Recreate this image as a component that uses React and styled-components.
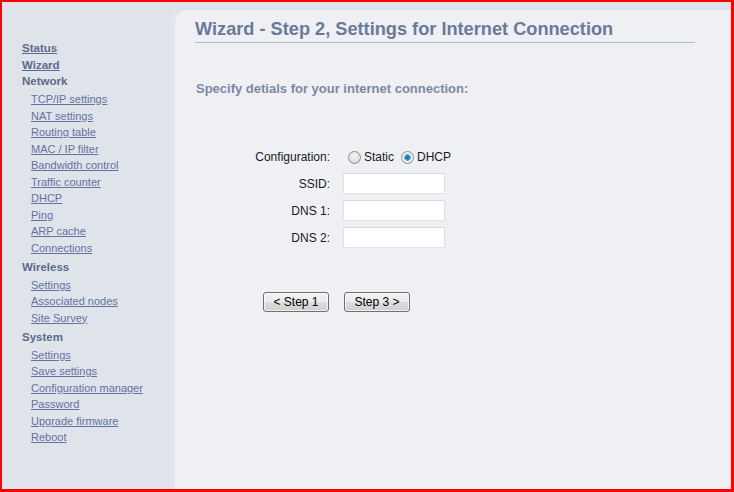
import React from "react";
import styled, { createGlobalStyle } from "styled-components";

const Global = createGlobalStyle`
  html, body { margin: 0; padding: 0; }
  body { font-family: "Liberation Sans", Arial, sans-serif; background: #dfe3ea; }
  * { box-sizing: border-box; }
`;

const Frame = styled.div`
  width: 734px;
  height: 492px;
  border: 2px solid #f00;
  border-right-width: 3px;
  border-bottom-width: 3px;
  background: #dfe3ea;
  display: flex;
  overflow: hidden;
`;

const Sidebar = styled.nav`
  width: 173px;
  flex: none;
  padding: 38px 0 0 20px;
  display: flex;
  flex-direction: column;
  font-family: "Liberation Sans", Tahoma, sans-serif;
  font-size: 11px;
  line-height: 16.5px;
  background: linear-gradient(to right, #dfe3ea 0, #dfe3ea 166px, #e3e7ee 173px);
`;

const TopLink = styled.a`
  color: #5b6b8d;
  font-weight: bold;
  font-size: 11.5px;
  text-decoration: underline;
  align-self: flex-start;
`;

const Heading = styled.div`
  color: #5b6b8d;
  font-weight: bold;
  font-size: 11.5px;
  padding: ${(p) => (p.$first ? "0 0 1.5px" : "2.5px 0 1.5px")};
`;

const SubLink = styled.a`
  color: #6373a0;
  text-decoration: underline;
  margin-left: 9px;
  align-self: flex-start;
`;

const Main = styled.main`
  flex: 1;
  margin-top: 8px;
  background: #eef0f4;
  border-top-left-radius: 12px;
  padding: 8px 0 0 20px;
`;

const Title = styled.h1`
  margin: 0;
  width: 500px;
  font-size: 18.2px;
  line-height: 22px;
  font-weight: bold;
  color: #6b7a99;
  padding-bottom: 2px;
  border-bottom: 1px solid #b3bccd;
`;

const Subtitle = styled.p`
  margin: 38px 0 0 1px;
  font-size: 13px;
  line-height: 16px;
  font-weight: bold;
  color: #7b89a5;
`;

const Form = styled.div`
  margin-top: 50px;
  display: grid;
  grid-template-columns: 135px auto;
  column-gap: 13px;
  row-gap: 6px;
  align-items: center;
  justify-content: start;
  font-size: 12px;
  color: #1a1a1a;
`;

const Label = styled.label`
  text-align: right;
  line-height: 20px;
`;

const RadioGroup = styled.div`
  display: flex;
  align-items: center;
  height: 20px;
`;

const Radio = styled.input.attrs({ type: "radio" })`
  appearance: none;
  width: 13px;
  height: 13px;
  margin: 0 3px 0 5px;
  border-radius: 50%;
  border: 1px solid #8e8f8f;
  background: radial-gradient(circle at 50% 35%, #f6f6f6 0, #e2e2e2 55%, #c8c8c8 100%);
  &:checked {
    background: radial-gradient(circle at 50% 50%, #1d5f8c 0, #2a7fb5 1.5px, #5aa7d8 3px, #e8eef2 3.6px, #f0f0f0 100%);
  }
`;

const RadioText = styled.span`
  margin-right: 2px;
`;

const TextInput = styled.input.attrs({ type: "text" })`
  width: 102px;
  height: 21px;
  border: 1px solid #dfe2e8;
  border-top-color: #d6dae2;
  background: #fff;
  margin: 0;
  padding: 0 2px;
  font: inherit;
`;

const Buttons = styled.div`
  margin: 44px 0 0 68px;
  display: flex;
  gap: 15px;
`;

const Button = styled.button`
  width: 66px;
  height: 20px;
  padding: 0;
  font-family: "Liberation Sans", Arial, sans-serif;
  font-size: 12px;
  color: #000;
  border: 1px solid #707070;
  border-radius: 3px;
  background: linear-gradient(#f2f2f2 0%, #ebebeb 50%, #dddddd 51%, #cfcfcf 100%);
  box-shadow: inset 0 0 0 1px rgba(255, 255, 255, 0.7);
`;

const system = ["Settings", "Save settings", "Configuration manager", "Password", "Upgrade firmware", "Reboot"];
const network = [
  "TCP/IP settings",
  "NAT settings",
  "Routing table",
  "MAC / IP filter",
  "Bandwidth control",
  "Traffic counter",
  "DHCP",
  "Ping",
  "ARP cache",
  "Connections",
];
const wireless = ["Settings", "Associated nodes", "Site Survey"];

export default function App() {
  return (
    <>
      <Global />
      <Frame>
        <Sidebar>
          <TopLink href="#">Status</TopLink>
          <TopLink href="#">Wizard</TopLink>
          <Heading $first>Network</Heading>
          {network.map((n) => (
            <SubLink key={n} href="#">{n}</SubLink>
          ))}
          <Heading>Wireless</Heading>
          {wireless.map((n) => (
            <SubLink key={n} href="#">{n}</SubLink>
          ))}
          <Heading>System</Heading>
          {system.map((n) => (
            <SubLink key={n} href="#">{n}</SubLink>
          ))}
        </Sidebar>
        <Main>
          <Title>Wizard - Step 2, Settings for Internet Connection</Title>
          <Subtitle>Specify detials for your internet connection:</Subtitle>
          <Form>
            <Label>Configuration:</Label>
            <RadioGroup>
              <Radio name="cfg" />
              <RadioText>Static</RadioText>
              <Radio name="cfg" defaultChecked />
              <RadioText>DHCP</RadioText>
            </RadioGroup>
            <Label>SSID:</Label>
            <TextInput />
            <Label>DNS 1:</Label>
            <TextInput />
            <Label>DNS 2:</Label>
            <TextInput />
          </Form>
          <Buttons>
            <Button>&lt; Step 1</Button>
            <Button>Step 3 &gt;</Button>
          </Buttons>
        </Main>
      </Frame>
    </>
  );
}
